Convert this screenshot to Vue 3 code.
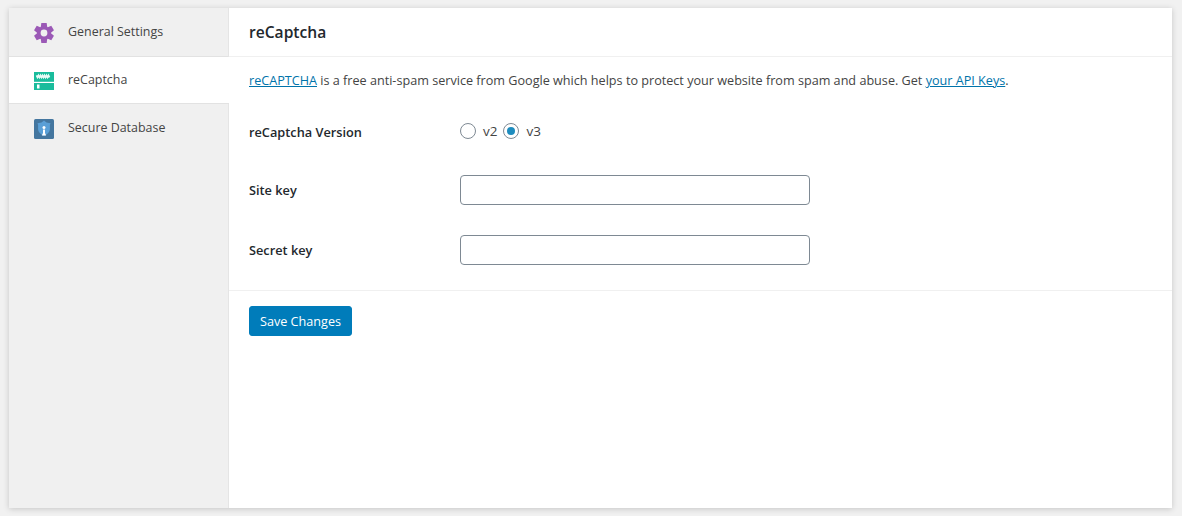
<template>
  <div class="page">
    <div class="panel">
      <ul class="side">
        <li v-for="tab in tabs" :key="tab.name" class="tab" :class="{ active: tab.name === active }">
          <svg v-if="tab.icon === 'gear'" class="ico" viewBox="0 0 20 20">
            <path fill="#9b59b6" fill-rule="evenodd" :d="gearPath"/>
          </svg>
          <svg v-else-if="tab.icon === 'captcha'" class="ico" viewBox="0 0 20 20">
            <rect y="1" width="20" height="9.800" fill="#1abc9c"/>
            <rect y="12" width="20" height="7" fill="#1abc9c"/>
            <path d="M2.500 4.300l1 2 1-2 1 2 1-2 1 2 1-2 1 2 1-2 1 2 1-2 1 2 1-2 1 2" fill="none" stroke="#eafaf6" stroke-width="1.700"/>
            <rect x="3" y="13.500" width="2.500" height="4" fill="#fff"/>
          </svg>
          <svg v-else class="ico" viewBox="0 0 20 20">
            <rect width="20" height="20" rx="1.500" fill="#44769f"/>
            <path d="M10 1.500l2.500 2 4 .8-.6 1.700v4c0 3-2.900 5.500-5.900 7-3-1.500-5.900-4-5.900-7V6l-.6-1.700 4-.8z" fill="#5a9fd6"/>
            <circle cx="10" cy="8.500" r="1.500" fill="#fff"/>
            <path d="M9 10.500h2v3.500l1.200 2.500H7.800L9 14z" fill="#fff"/>
          </svg>
          <span class="tab-name">{{ tab.name }}</span>
        </li>
      </ul>
      <div class="main">
        <h2 class="title">reCaptcha</h2>
        <p class="intro">
          <a href="#">reCAPTCHA</a> is a free anti-spam service from Google which helps to protect your website from spam and abuse. Get <a href="#">your API Keys</a>.
        </p>
        <div class="fields">
          <div class="row radio-row">
            <label class="lbl">reCaptcha Version</label>
            <div class="radios">
              <label class="radio"><span class="dot"></span>v2</label>
              <label class="radio"><span class="dot on"></span>v3</label>
            </div>
          </div>
          <div class="row">
            <label class="lbl">Site key</label>
            <input class="inp" type="text" />
          </div>
          <div class="row">
            <label class="lbl">Secret key</label>
            <input class="inp" type="text" />
          </div>
        </div>
        <div class="actions">
          <button class="save">Save Changes</button>
        </div>
      </div>
    </div>
  </div>
</template>

<script setup>
const active = 'reCaptcha'
const tabs = [
  { name: 'General Settings', icon: 'gear' },
  { name: 'reCaptcha', icon: 'captcha' },
  { name: 'Secure Database', icon: 'db' }
]

// six teeth around a hole
function pt(r, deg) {
  const a = (deg * Math.PI) / 180
  return `${(10 + r * Math.cos(a)).toFixed(2)} ${(10 + r * Math.sin(a)).toFixed(2)}`
}
let outline = ''
for (let i = 0; i < 6; i++) {
  const c = -90 + i * 60
  outline += `${i ? 'L' : 'M'}${pt(7, c - 27)}L${pt(10.3, c - 15)}L${pt(10.3, c + 15)}L${pt(7, c + 27)}`
}
const gearPath = `${outline}ZM10 6.600a3.400 3.400 0 1 0 0 6.800a3.400 3.400 0 0 0 0-6.800Z`
</script>

<style>
html, body { margin: 0; background: #f1f1f1; }
</style>

<style scoped>
.page { height: 516px; box-sizing: border-box; padding: 8px 10px 8px 9px; font-family: "Open Sans", "Noto Sans", sans-serif; font-size: 12.63px; color: #444; }
.panel { display: flex; height: 500px; background: #fff; box-shadow: 0 1px 6px rgba(0,0,0,.18); }
.side { width: 220px; box-sizing: border-box; flex: none; margin: 0; padding: 0; list-style: none; background: #f0f0f0; border-right: 1px solid #e5e5e5; }
.tab { display: flex; align-items: center; height: 47px; box-sizing: border-box; padding-left: 25px; border-bottom: 1px solid #e2e2e2; }
.tab:first-child { height: 49px; }
.tab:last-child { height: 48px; border-bottom: 0; }
.tab.active { background: #fff; margin-right: -1px; position: relative; }
.tab-name { margin: 0 0 2px 14px; font-size: 12.45px; }
.ico { width: 20px; height: 20px; flex: none; margin-top: 2px; }
.main { flex: 1; min-width: 0; }
.title { margin: 0; height: 49px; box-sizing: border-box; padding: 0 20px; line-height: 49px; font-size: 15.6px; font-weight: 600; color: #23282d; border-bottom: 1px solid #f0f0f0; }
.intro { margin: 15px 20px 0; line-height: 18px; }
.intro a { color: #0073aa; }
.fields { display: flex; flex-direction: column; gap: 30px; box-sizing: border-box; height: 201px; padding: 27px 20px 0; border-bottom: 1px solid #f0f0f0; }
.row { display: flex; align-items: center; height: 30px; }
.radio-row { height: 28px; }
.lbl { width: 211px; flex: none; font-size: 12.75px; font-weight: 600; color: #23282d; }
.radio-row .lbl { padding-top: 1px; }
.radios { display: flex; gap: 6px; }
.radio { display: flex; align-items: center; gap: 7px; font-size: 13.5px; line-height: 16px; }
.dot { width: 14px; height: 14px; border: 1px solid #7e8993; border-radius: 50%; background: #fff; position: relative; }
.dot.on::after { content: ""; position: absolute; left: 3px; top: 3px; width: 8px; height: 8px; border-radius: 50%; background: #1e8cbe; }
.inp { width: 350px; height: 30px; box-sizing: border-box; border: 1px solid #7e8993; border-radius: 4px; background: #fff; padding: 0 8px; margin: 0; }
.actions { padding: 15px 20px; }
.save { height: 30px; width: 103px; padding: 0; background: #007cba; border: 1px solid #007cba; border-radius: 3px; color: #fff; font: 12.63px "Open Sans", "Noto Sans", sans-serif; }
</style>
